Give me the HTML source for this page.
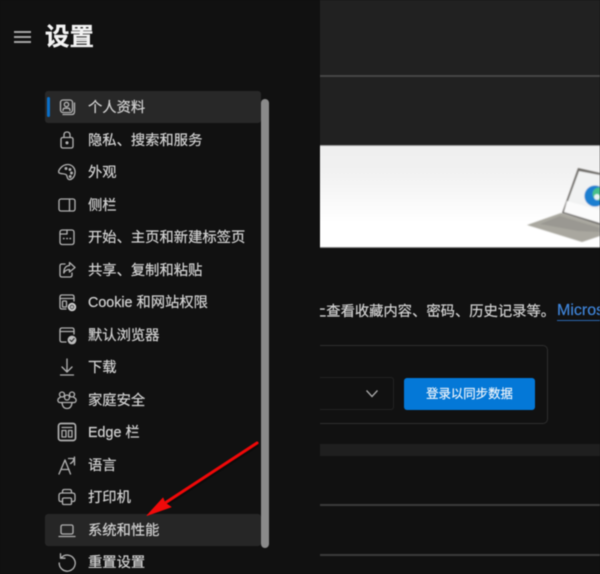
<!DOCTYPE html>
<html lang="zh">
<head>
<meta charset="utf-8">
<style>
html,body{margin:0;padding:0;background:#111;}
#p{position:relative;width:600px;height:574px;overflow:hidden;background:#111;font-family:"Liberation Sans","Noto Sans CJK SC",sans-serif;filter:blur(.45px);}
.a{position:absolute;}
.t{position:absolute;left:88px;margin-top:1px;font-size:14.3px;line-height:20px;color:#d2d2d2;white-space:nowrap;-webkit-text-stroke:.2px #d2d2d2;}
svg.i{position:absolute;left:57px;width:20px;height:20px;fill:none;stroke:#b0b0b0;stroke-width:1.35;stroke-linecap:round;stroke-linejoin:round;}
</style>
</head>
<body>
<div id="p">
  <!-- right pane -->
  <div class="a" style="left:320px;top:0;width:280px;height:145px;background:#212121"></div>
  <div class="a" style="left:320px;top:75px;width:280px;height:2px;background:#464646"></div>
  <div class="a" style="left:320px;top:145px;width:280px;height:103px;background:linear-gradient(#efefef 0,#f1f1f1 25%,#fff 75%,#fff 100%);border-top:1px solid #999;border-bottom:1px solid #888;box-sizing:border-box"></div>
  <svg class="a" style="left:510px;top:150px" width="90" height="100" viewBox="0 0 90 100">
    <defs><filter id="b" x="-10%" y="-10%" width="120%" height="120%"><feGaussianBlur stdDeviation=".5"/></filter></defs>
    <g filter="url(#b)">
      <polygon points="17,75 51,63 90,75 90,86 72,92" fill="#a9a79f"/>
      <polygon points="30,74 50,66 90,78 90,82 68,81" fill="#9a9892"/>
      <polygon points="68,18 90,23 90,75 52,63" fill="#6a6864"/>
      <polygon points="69,21 90,25 90,73 54,62" fill="#f1f2f2"/>
      <polygon points="57,51 90,60 90,73 54,62" fill="#fbfbfb"/>
      <circle cx="85" cy="46" r="10.5" fill="#1f7fd0"/>
      <circle cx="89" cy="44" r="6.5" fill="#46c08a"/>
      <circle cx="87" cy="47" r="3" fill="#e8f3f4"/>
    </g>
  </svg>

  <div class="a" style="left:312px;top:302px;font-size:14.3px;line-height:20px;color:#d2d2d2;white-space:nowrap;-webkit-text-stroke:.2px #d2d2d2;">上查看收藏内容、密码、历史记录等。</div>
  <div class="a" style="left:557px;top:301px;font-size:16px;line-height:19px;color:#3f84d8;border-bottom:1px solid #2b66ad;white-space:nowrap;-webkit-text-stroke:.2px #3f84d8;">Microsoft</div>

  <div class="a" style="left:300px;top:345px;width:248px;height:79px;box-sizing:border-box;border:1.5px solid #2e2e2e;border-left:none;border-radius:0 5px 5px 0"></div>
  <div class="a" style="left:300px;top:377px;width:94px;height:33px;box-sizing:border-box;border:1.5px solid #232323;border-left:none;border-radius:0 3px 3px 0"></div>
  <svg class="a" style="left:364px;top:388px" width="16" height="12" viewBox="0 0 16 12"><path d="M2.5 2.5 L8 8.5 L13.5 2.5" fill="none" stroke="#a8a8a8" stroke-width="1.3"/></svg>
  <div class="a" style="left:404px;top:378px;width:131px;height:32px;background:#0478d7;border-radius:3px;color:#f2f6fb;font-size:12.4px;line-height:32px;text-align:center;-webkit-text-stroke:.15px #f2f6fb;">登录以同步数据</div>

  <div class="a" style="left:320px;top:444px;width:280px;height:12px;background:#1f1f1f"></div>
  <div class="a" style="left:320px;top:504px;width:280px;height:2px;background:#3a3a3a"></div>
  <div class="a" style="left:320px;top:554px;width:280px;height:2px;background:#3a3a3a"></div>

  <!-- sidebar -->
  <div class="a" style="left:0;top:0;width:320px;height:574px;background:#111"></div>
  <div class="a" style="left:14px;top:31px;width:17px;height:1.5px;background:#a5a5a5"></div>
  <div class="a" style="left:14px;top:36px;width:17px;height:1.5px;background:#a5a5a5"></div>
  <div class="a" style="left:14px;top:41px;width:17px;height:1.5px;background:#a5a5a5"></div>
  <div class="a" style="left:45px;top:22px;font-size:24.5px;line-height:32px;font-weight:700;color:#f2f2f2;-webkit-text-stroke:.3px #f2f2f2;">设置</div>

  <div class="a" style="left:45px;top:91px;width:216px;height:32px;background:#282828;border-radius:3px"></div>
  <div class="a" style="left:47px;top:97px;width:3px;height:20px;background:#0a6fc8;border-radius:2px"></div>
  <div class="a" style="left:45px;top:514px;width:216px;height:32px;background:#262626;border-radius:3px"></div>
  <div class="a" style="left:261px;top:99px;width:8px;height:449px;background:#8a8a8a;border-radius:4px"></div>

  <svg class="i" style="top:97px" viewBox="0 0 20 20"><rect x="3.5" y="3" width="12" height="12.5" rx="2.5"/><path d="M17.5 6 V14.5 Q17.5 17.5 14.5 17.5 H6"/><circle cx="9.5" cy="7.5" r="2.2"/><path d="M6 13.5 Q6 11.2 8 11.2 H11 Q13 11.2 13 13.5"/></svg>
  <div class="t" style="top:97px">个人资料</div>

  <svg class="i" style="top:130px" viewBox="0 0 20 20"><rect x="4" y="7.5" width="12" height="10.5" rx="1.8"/><path d="M7 7.5 V5 Q7 2 10 2 Q13 2 13 5 V7.5"/><circle cx="10" cy="12.8" r=".9" fill="#b0b0b0"/></svg>
  <div class="t" style="top:130px">隐私、搜索和服务</div>

  <svg class="i" style="top:162px" viewBox="0 0 20 20"><path d="M10.5 2.5 C15.5 2.5 18.5 6.5 18 11 C17.5 15.5 14.5 18 12 17.5 C9.8 17 10.5 14.5 9.5 13 C8 11 3 12.5 1.8 10.5 C1 8.5 5 2.5 10.5 2.5Z"/><circle cx="9" cy="6.5" r=".8" fill="#b0b0b0"/><circle cx="13" cy="7.5" r=".8" fill="#b0b0b0"/><circle cx="14.5" cy="11" r=".8" fill="#b0b0b0"/><circle cx="13.2" cy="14.5" r=".8" fill="#b0b0b0"/></svg>
  <div class="t" style="top:162px">外观</div>

  <svg class="i" style="top:195px" viewBox="0 0 20 20"><rect x="2" y="4" width="16" height="12" rx="2"/><path d="M12.5 4 V16"/></svg>
  <div class="t" style="top:195px">侧栏</div>

  <svg class="i" style="top:227px" viewBox="0 0 20 20"><rect x="3" y="3" width="14" height="14.5" rx="2.2"/><path d="M3 7 H10 V3"/><path d="M6.5 11.5 H7 M9.8 11.5 H10.3 M13 11.5 H13.5" stroke-width="1.5"/></svg>
  <div class="t" style="top:227px">开始、主页和新建标签页</div>

  <svg class="i" style="top:260px" viewBox="0 0 20 20"><path d="M8 4 H5 Q3 4 3 6 V15 Q3 17 5 17 H13 Q15 17 15 15 V13"/><path d="M12.5 2.5 L18 7.5 L12.5 12 V9.5 Q8.5 9.5 6.8 13 Q6.8 6 12.5 5.5Z"/></svg>
  <div class="t" style="top:260px">共享、复制和粘贴</div>

  <svg class="i" style="top:292px" viewBox="0 0 20 20"><path d="M9 17 H5 Q3 17 3 15 V5 Q3 3 5 3 H15 Q17 3 17 5 V9"/><path d="M3 6.5 H17"/><rect x="5.5" y="9" width="4" height="6" rx=".8"/><circle cx="15" cy="15" r="3.2" stroke-width="2" stroke-dasharray="1.6 .6" stroke="#cfcfcf"/><circle cx="15" cy="15" r="1" fill="#cfcfcf"/></svg>
  <div class="t" style="top:292px">Cookie 和网站权限</div>

  <svg class="i" style="top:325px" viewBox="0 0 20 20"><path d="M9 17 H5 Q3 17 3 15 V5 Q3 3 5 3 H15 Q17 3 17 5 V9"/><path d="M3 6.5 H17"/><circle cx="15" cy="15" r="4.4" fill="#bdbdbd" stroke="none"/><path d="M13 15 L14.6 16.5 L17.2 13.5" stroke="#222" stroke-width="1"/></svg>
  <div class="t" style="top:325px">默认浏览器</div>

  <svg class="i" style="top:357px" viewBox="0 0 20 20"><path d="M10 2 V14.5 M5 10 L10 15 L15 10 M3.5 18 H16.5"/></svg>
  <div class="t" style="top:357px">下载</div>

  <svg class="i" style="top:390px" viewBox="0 0 20 20"><circle cx="5" cy="4.5" r="2.5"/><circle cx="15" cy="4.5" r="2.5"/><circle cx="10" cy="7.5" r="2.5"/><path d="M3 7.5 Q.5 8.5 1 11 Q1.5 13 5 12.5 M17 7.5 Q19.5 8.5 19 11 Q18.5 13 15 12.5"/><path d="M5 12.5 Q5.5 18.5 10 18.5 Q14.5 18.5 15 12.5 Z"/></svg>
  <div class="t" style="top:390px">家庭安全</div>

  <svg class="i" style="top:422px;stroke-width:1.7" viewBox="0 0 20 20"><rect x="1.5" y="1.5" width="17" height="17" rx="2.5"/><path stroke-width="1.3" d="M5 5.5 H15 M5 8.5 H9 V15 H5 Z M11.5 8.5 H15 V15 H11.5 Z"/></svg>
  <div class="t" style="top:422px">Edge 栏</div>

  <svg class="i" style="top:455px" viewBox="0 0 20 20"><path d="M2 19 L8 5 L13.5 19 M4.5 14.5 H12"/><path d="M11.5 3.5 H17 Q16.5 7 13.5 8.5 M17.5 2 V10"/></svg>
  <div class="t" style="top:455px">语言</div>

  <svg class="i" style="top:487px" viewBox="0 0 20 20"><path d="M5.5 6 V4.5 Q5.5 2.5 7.5 2.5 H12.5 Q14.5 2.5 14.5 4.5 V6"/><path d="M5.5 14.5 H4 Q2 14.5 2 12.5 V8.5 Q2 6 4.5 6 H15.5 Q18 6 18 8.5 V12.5 Q18 14.5 16 14.5 H14.5"/><rect x="5.5" y="11" width="9" height="6.5" rx="1.2"/></svg>
  <div class="t" style="top:487px">打印机</div>

  <svg class="i" style="top:520px" viewBox="0 0 20 20"><rect x="4" y="5" width="12" height="9" rx="1.5"/><path d="M2 16.5 H18"/></svg>
  <div class="t" style="top:520px">系统和性能</div>

  <svg class="i" style="top:552px" viewBox="0 0 20 20"><path d="M4.5 5.5 A8 8 0 1 1 2.2 11"/><path d="M3.5 1.8 V6.2 H8"/></svg>
  <div class="t" style="top:552px">重置设置</div>

  <!-- red arrow -->
  <svg class="a" style="left:0;top:0" width="600" height="574" viewBox="0 0 600 574">
    <path d="M257 443 L165 503" stroke="#000" stroke-opacity=".35" stroke-width="3" transform="translate(1 2)"/>
    <path d="M257 443 L165 503" stroke="#ee0808" stroke-width="3" stroke-linecap="round"/>
    <polygon points="147,515.5 163,498 165,503 171,507" fill="#f00a0a" stroke="#f00a0a" stroke-width=".8" stroke-linejoin="round"/>
  </svg>
</div>
</body>
</html>
